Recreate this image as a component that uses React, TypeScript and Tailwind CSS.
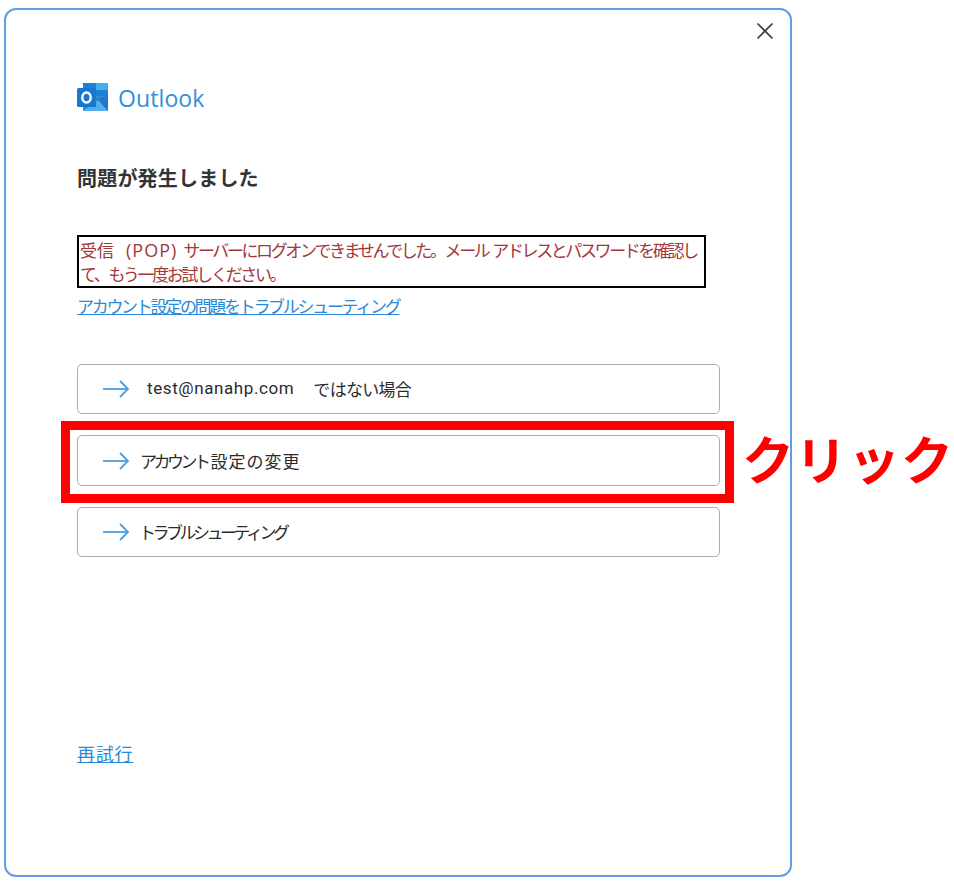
import { X } from "lucide-react";

const font = { jp: "font-['Noto_Sans_CJK_JP','Liberation_Sans',sans-serif]" };

function OutlookLogo() {
  return (
    <svg width="32" height="30" viewBox="0 0 32 30" className="shrink-0">
      <rect x="6" y="0" width="25" height="14" fill="#1a80d8" />
      <rect x="19" y="0" width="12" height="7" fill="#3fb0ee" />
      <path d="M6 13 H31 V27 Q31 28 30 28 H7 Q6 28 6 27 Z" fill="#2a8fdc" />
      <path d="M15 17 L31 13 V28 Z" fill="#2277c8" />
      <path d="M6 28 L21 17 L31 28 Z" fill="#50b0ee" />
      <rect x="0" y="5" width="19" height="19" rx="1.5" fill="#1877cf" />
      <ellipse cx="9.5" cy="14.5" rx="4.2" ry="5" fill="none" stroke="#fff" strokeWidth="2.4" />
    </svg>
  );
}

function Arrow() {
  return (
    <svg width="26" height="18" viewBox="0 0 26 18" fill="none" stroke="#4a9fe0" strokeWidth="1.8" className="shrink-0">
      <path d="M0 9 H25" />
      <path d="M17 1 L25 9 L17 17" />
    </svg>
  );
}

function ActionButton({ tall, children }: { tall?: boolean; children: React.ReactNode }) {
  return (
    <div
      className={`flex items-center rounded-[5px] border border-[#ababab] bg-white pl-[25px] text-[17px] text-[#2b2b2b] ${
        tall ? "h-[51px]" : "h-[50px]"
      }`}
    >
      <Arrow />
      {children}
    </div>
  );
}

export default function App() {
  return (
    <div className={`relative h-[885px] w-[954px] overflow-hidden bg-white pl-[4px] pt-[8px] ${font.jp}`}>
      <div className="relative flex h-[869px] w-[788px] flex-col rounded-[12px] border-2 border-[#5c9fe2] px-[71px]">
        {/* Cerrar */}
        <button className="absolute right-[11px] top-[7px] text-[#3c3c3c]">
          <X size={28} strokeWidth={1.5} />
        </button>

        {/* Logo */}
        <div className="mt-[73px] flex h-[30px] items-center gap-[9px]">
          <OutlookLogo />
          <span className="font-['Open_Sans',sans-serif] text-[23px] tracking-[0.1px] text-[#2f8fe0]">Outlook</span>
        </div>

        <h1 className="mt-[48px] h-[34px] text-[20px] font-bold leading-[34px] tracking-[0.2px] text-[#333333]">問題が発生しました</h1>

        {/* Error */}
        <div className="mt-[40px] h-[53px] w-[629px] border-2 border-black pl-[1px] pt-[1px] text-[17px] leading-[24px] tracking-[-2.4px] text-[#a4373a]">
          <div className="flex whitespace-pre">
            <span className="tracking-[0px]">受信</span>
            <span className="ml-[12px] mr-[6px] font-['Open_Sans',sans-serif] text-[18px] tracking-[1px]">(POP)</span>
            <span>サーバーにログオンできませんでした。メール</span>
            <span className="ml-[4px]">アドレスとパスワードを確認し</span>
          </div>
          <div className="tracking-[-2.3px]">て、もう一度お試しください。</div>
        </div>
        <a className="mt-[5px] h-[26px] text-[17px] leading-[26px] tracking-[-2.3px] text-[#2b88d8] underline">
          アカウント設定の問題をトラブルシューティング
        </a>

        {/* Opciones */}
        <div className="mt-[45px] flex w-[643px] flex-col gap-[21px]">
          <ActionButton>
            <span className="ml-[18px] font-['Roboto',sans-serif] tracking-[0.6px]">test@nanahp.com</span>
            <span className="ml-[19px] tracking-[-0.7px]">ではない場合</span>
          </ActionButton>
          <div className="relative">
            <ActionButton tall>
              <span className="ml-[11px]">
                <span className="tracking-[-3.5px]">アカウント</span>
                <span className="ml-[3px] tracking-[1px]">設定の変更</span>
              </span>
            </ActionButton>
            <div className="absolute -bottom-[17px] -left-[16px] -right-[14px] -top-[14px] border-[9px] border-[#ff0000]" />
          </div>
          <ActionButton>
            <span className="ml-[10px] tracking-[-3.5px]">トラブルシューティング</span>
          </ActionButton>
        </div>

        <a className="mt-[183px] w-fit text-[18px] leading-[26px] tracking-[0.8px] text-[#2b88d8] underline">再試行</a>
      </div>

      {/* Anotacion */}
      <span className="absolute left-[742px] top-[421px] text-[52px] font-bold leading-[74px] tracking-[1px] text-[#ff0000]">
        クリック
      </span>
    </div>
  );
}
